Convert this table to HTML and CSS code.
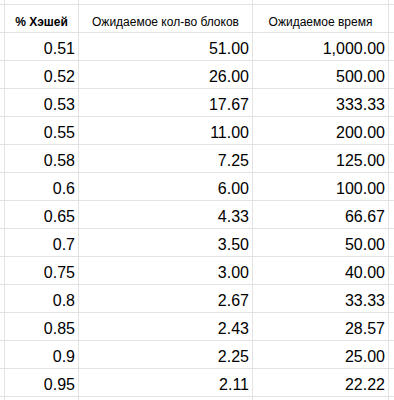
FILE: index.html
```html
<!DOCTYPE html>
<html lang="ru">
<head>
<meta charset="utf-8">
<title>Ожидаемое время</title>
<link rel="stylesheet" href="styles.css">
</head>
<body>
<div class="sheet">
  <div class="c"></div><div class="c"></div><div class="c"></div><div class="c"></div><div class="c"></div>

  <div class="c"></div><div class="c h h1">% Хэшей</div><div class="c h">Ожидаемое кол-во блоков</div><div class="c h">Ожидаемое время</div><div class="c"></div>

  <div class="c"></div><div class="c n">0.51</div><div class="c n">51.00</div><div class="c n">1,000.00</div><div class="c"></div>
  <div class="c"></div><div class="c n">0.52</div><div class="c n">26.00</div><div class="c n">500.00</div><div class="c"></div>
  <div class="c"></div><div class="c n">0.53</div><div class="c n">17.67</div><div class="c n">333.33</div><div class="c"></div>
  <div class="c"></div><div class="c n">0.55</div><div class="c n">11.00</div><div class="c n">200.00</div><div class="c"></div>
  <div class="c"></div><div class="c n">0.58</div><div class="c n">7.25</div><div class="c n">125.00</div><div class="c"></div>
  <div class="c"></div><div class="c n">0.6</div><div class="c n">6.00</div><div class="c n">100.00</div><div class="c"></div>
  <div class="c"></div><div class="c n">0.65</div><div class="c n">4.33</div><div class="c n">66.67</div><div class="c"></div>
  <div class="c"></div><div class="c n">0.7</div><div class="c n">3.50</div><div class="c n">50.00</div><div class="c"></div>
  <div class="c"></div><div class="c n">0.75</div><div class="c n">3.00</div><div class="c n">40.00</div><div class="c"></div>
  <div class="c"></div><div class="c n">0.8</div><div class="c n">2.67</div><div class="c n">33.33</div><div class="c"></div>
  <div class="c"></div><div class="c n">0.85</div><div class="c n">2.43</div><div class="c n">28.57</div><div class="c"></div>
  <div class="c"></div><div class="c n">0.9</div><div class="c n">2.25</div><div class="c n">25.00</div><div class="c"></div>
  <div class="c"></div><div class="c n">0.95</div><div class="c n">2.11</div><div class="c n">22.22</div><div class="c"></div>

  <div class="c"></div><div class="c"></div><div class="c"></div><div class="c"></div><div class="c"></div>
</div>
</body>
</html>
```

FILE: styles.css
```css
html, body {
  margin: 0;
  padding: 0;
  background: #ffffff;
  overflow: hidden;
}

.sheet {
  display: grid;
  grid-template-columns: 4px 73px 173px 135px 1fr;
  grid-template-rows: 4px repeat(14, 27px) 1fr;
  gap: 1px;
  width: 394px;
  height: 400px;
  background: #e2e3e3;
  font-family: "Liberation Sans", Arial, sans-serif;
  color: #000000;
}

.c {
  background: #ffffff;
  display: flex;
  align-items: flex-end;
  overflow: hidden;
  white-space: nowrap;
}

.h {
  justify-content: center;
  font-size: 12px;
  line-height: 14px;
  padding-bottom: 3px;
}

.h1 {
  font-weight: bold;
}

.n {
  justify-content: flex-end;
  font-size: 16px;
  line-height: 18px;
  padding: 0 3px 2px 0;
}
```
